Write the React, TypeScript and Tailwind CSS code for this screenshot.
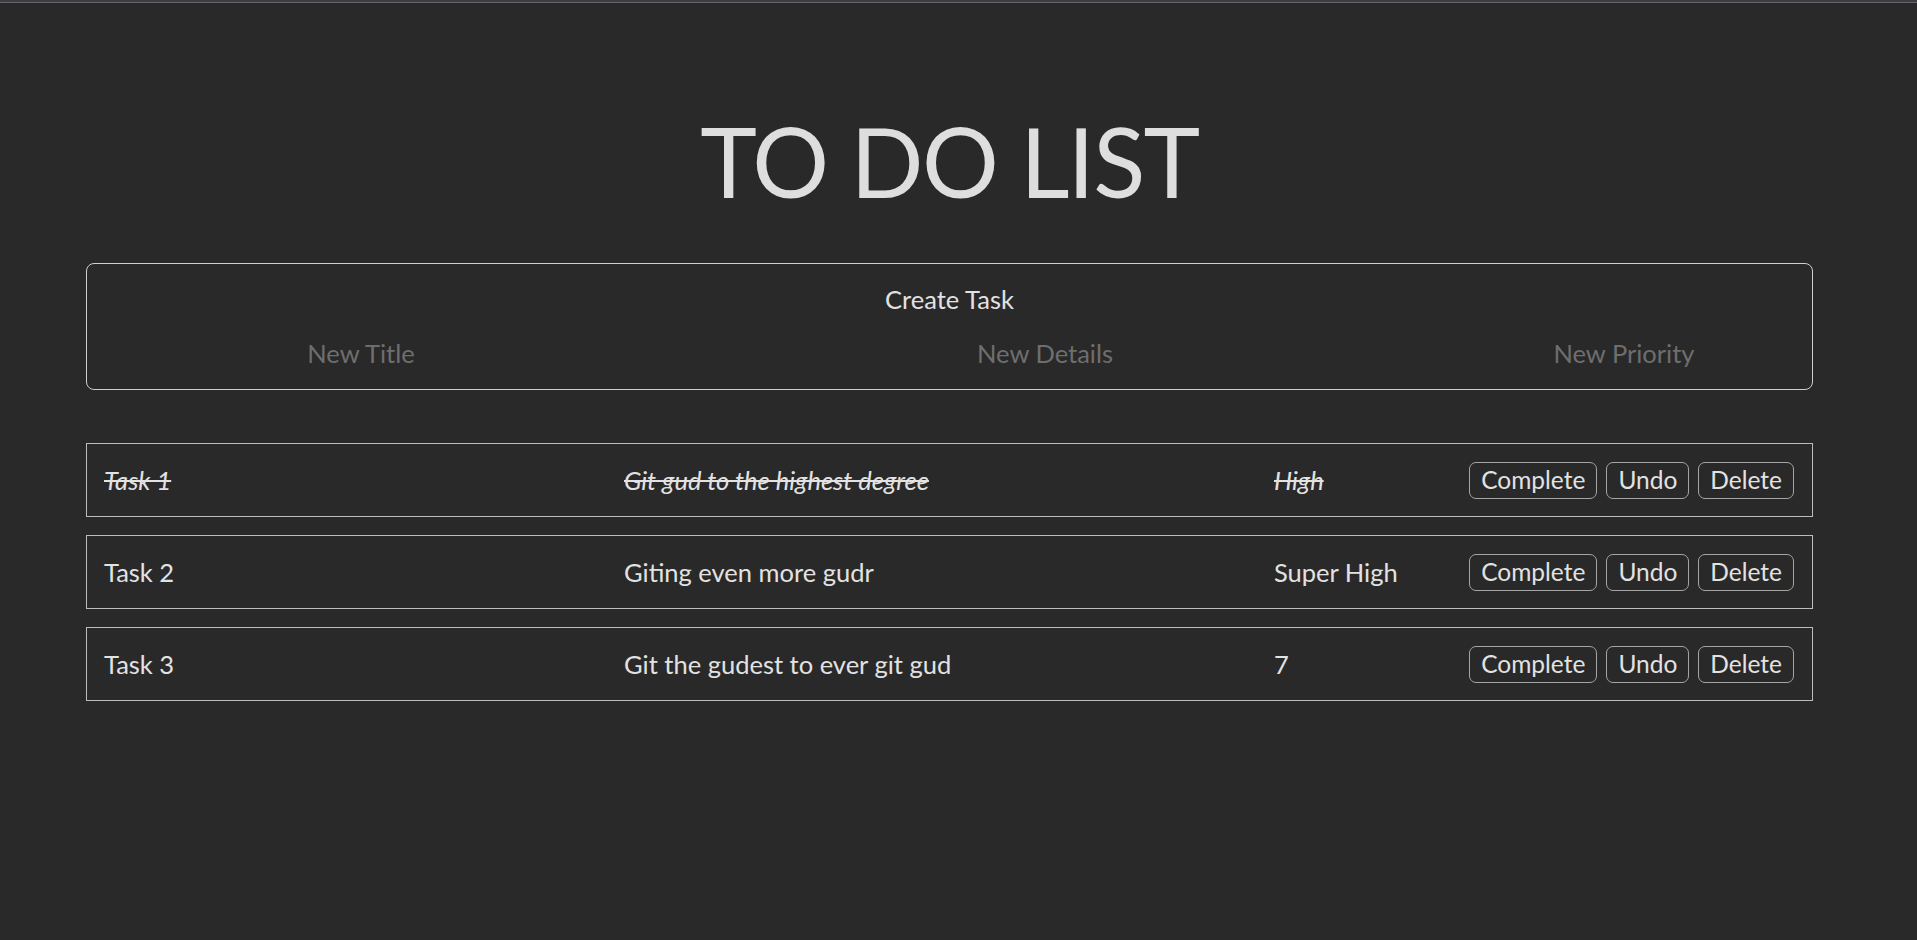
import { useState } from "react";

type Task = {
  title: string;
  details: string;
  priority: string;
  done: boolean;
};

const initialTasks: Task[] = [
  { title: "Task 1", details: "Git gud to the highest degree", priority: "High", done: true },
  { title: "Task 2", details: "Giting even more gudr", priority: "Super High", done: false },
  { title: "Task 3", details: "Git the gudest to ever git gud", priority: "7", done: false },
];

function TaskRow({
  task,
  onComplete,
  onUndo,
  onDelete,
}: {
  task: Task;
  onComplete: () => void;
  onUndo: () => void;
  onDelete: () => void;
}) {
  const textCls = task.done ? "italic line-through" : "";
  return (
    <div className="flex h-[74px] items-center border border-[#bdbdbd] pl-[17px] pr-[18px] text-[25.5px] text-[#e2e2e2]">
      <span className={`w-[520px] ${textCls}`}>{task.title}</span>
      <span className={`w-[650px] ${textCls}`}>{task.details}</span>
      <span className={`flex-1 ${textCls}`}>{task.priority}</span>
      <div className="flex gap-[9px]">
        <button
          onClick={onComplete}
          className="h-[37px] rounded-[7px] border border-[#a5a5a5] px-[11px] text-[24.5px] leading-none text-[#e2e2e2]"
        >
          Complete
        </button>
        <button
          onClick={onUndo}
          className="h-[37px] rounded-[7px] border border-[#a5a5a5] px-[11px] text-[24.5px] leading-none text-[#e2e2e2]"
        >
          Undo
        </button>
        <button
          onClick={onDelete}
          className="h-[37px] rounded-[7px] border border-[#a5a5a5] px-[11px] text-[24.5px] leading-none text-[#e2e2e2]"
        >
          Delete
        </button>
      </div>
    </div>
  );
}

export default function App() {
  const [tasks, setTasks] = useState<Task[]>(initialTasks);
  const [form, setForm] = useState({ title: "", details: "", priority: "" });

  const setDone = (i: number, done: boolean) =>
    setTasks(tasks.map((t, j) => (j === i ? { ...t, done } : t)));

  return (
    <div className="min-h-screen bg-[#292929] font-['Lato','Noto_Sans',sans-serif]">
      <div className="h-[3px] border-b border-[#666666] bg-[#3d3d45]" />
      <div className="ml-[86px] w-[1727px]">
        <h1 className="mt-[110px] text-center text-[96px] leading-none font-normal tracking-[-1.6px] text-[#dedede]">
          TO DO LIST
        </h1>

        <div className="mt-[54px] rounded-[8px] border border-[#cfcfcf] pt-5 pb-[18px]">
          <div className="text-center text-[25.5px] leading-[30px] text-[#e2e2e2]">Create Task</div>
          <div className="mt-[21px] flex pl-[17px]">
            <input
              value={form.title}
              onChange={(e) => setForm({ ...form, title: e.target.value })}
              placeholder="New Title"
              className="h-9 w-[514px] bg-transparent text-center text-[25.5px] text-[#e2e2e2] outline-none placeholder:text-[#6e6e6e]"
            />
            <input
              value={form.details}
              onChange={(e) => setForm({ ...form, details: e.target.value })}
              placeholder="New Details"
              className="h-9 w-[854px] bg-transparent text-center text-[25.5px] text-[#e2e2e2] outline-none placeholder:text-[#6e6e6e]"
            />
            <input
              value={form.priority}
              onChange={(e) => setForm({ ...form, priority: e.target.value })}
              placeholder="New Priority"
              className="h-9 w-[304px] bg-transparent text-center text-[25.5px] text-[#e2e2e2] outline-none placeholder:text-[#6e6e6e]"
            />
          </div>
        </div>

        <div className="mt-[53px] flex flex-col gap-[18px]">
          {tasks.map((task, i) => (
            <TaskRow
              key={i}
              task={task}
              onComplete={() => setDone(i, true)}
              onUndo={() => setDone(i, false)}
              onDelete={() => setTasks(tasks.filter((_, j) => j !== i))}
            />
          ))}
        </div>
      </div>
    </div>
  );
}
